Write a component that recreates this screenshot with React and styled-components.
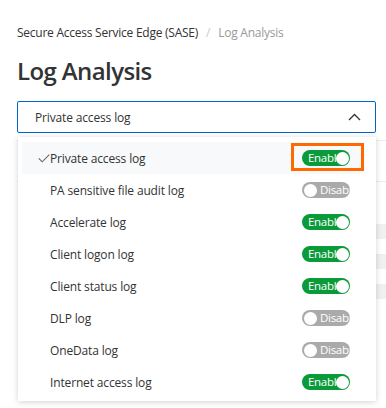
import React from 'react';
import styled, { createGlobalStyle } from 'styled-components';

const GlobalStyle = createGlobalStyle`
  html, body {
    margin: 0;
    padding: 0;
    background: #fff;
    font-family: "Open Sans", "Noto Sans", sans-serif;
  }
`;

const Page = styled.div`
  width: 386px;
  height: 408px;
  overflow: hidden;
  box-sizing: border-box;
  padding: 22px 0 0 17px;
`;

const Breadcrumb = styled.div`
  display: flex;
  align-items: center;
  gap: 8px;
  height: 20px;
  font-size: 12px;
  letter-spacing: -0.25px;
  color: #333;
`;

const Crumb = styled.span`
  color: ${p => (p.current ? '#999' : '#333')};
`;

const Sep = styled.span`
  color: #ccc;
`;

const Title = styled.h1`
  margin: 13px 0 14px;
  height: 32px;
  line-height: 32px;
  font-size: 24px;
  font-weight: 600;
  letter-spacing: -0.6px;
  color: #333;
`;

const SelectWrap = styled.div`
  position: relative;
  width: 369px;
`;

const SelectBox = styled.div`
  display: flex;
  align-items: center;
  justify-content: space-between;
  width: 359px;
  height: 32px;
  box-sizing: border-box;
  border: 1px solid #0064c8;
  border-radius: 2px;
  padding: 0 14px 0 17px;
  font-size: 12px;
  letter-spacing: -0.15px;
  color: #333;
`;

const Backdrop = styled.div`
  margin-top: 7px;
  display: flex;
  flex-direction: column;
`;

const BackLine = styled.div`
  height: ${p => p.h}px;
  border-bottom: 1px solid #ececec;
`;

const BackBand = styled.div`
  height: 15px;
  margin-top: ${p => p.gap}px;
  margin-left: 180px;
  background: #f0f0f0;
`;

const Menu = styled.div`
  position: absolute;
  top: 36px;
  left: 1px;
  width: 358px;
  box-sizing: border-box;
  padding: 5px 11px 3px 4px;
  background: #fff;
  box-shadow: 0 1px 6px rgba(0, 0, 0, 0.18);
`;

const Item = styled.div`
  position: relative;
  display: flex;
  align-items: center;
  justify-content: space-between;
  height: 32px;
  padding: 0 15px 0 28px;
  background: ${p => (p.selected ? '#f7f9fa' : 'transparent')};
  font-size: 12px;
  letter-spacing: -0.15px;
  color: #333;
`;

const Check = styled.svg`
  position: absolute;
  left: 16px;
  top: 12px;
`;

const Toggle = styled.div`
  position: relative;
  width: 48px;
  height: 16px;
  border-radius: 8px;
  background: ${p => (p.on ? '#0a9a3a' : '#aaaaaa')};
  overflow: hidden;
  color: #fff;
  font-size: 11.5px;
  letter-spacing: -0.3px;
  line-height: 16px;
  white-space: nowrap;
  padding-left: ${p => (p.on ? '6px' : '18px')};
  box-sizing: border-box;
`;

const Knob = styled.span`
  position: absolute;
  top: 1.5px;
  ${p => (p.on ? 'right: 1.5px;' : 'left: 1.5px;')}
  width: 13px;
  height: 13px;
  border-radius: 50%;
  background: #fff;
`;

const Highlight = styled.div`
  position: absolute;
  right: 1px;
  top: 1px;
  width: 73px;
  height: 28px;
  box-sizing: border-box;
  border: 3px solid #ff6a00;
`;

const logs = [
  ['Private access log', true],
  ['PA sensitive file audit log', false],
  ['Accelerate log', true],
  ['Client logon log', true],
  ['Client status log', true],
  ['DLP log', false],
  ['OneData log', false],
  ['Internet access log', true],
];

function Switch({ on }) {
  return (
    <Toggle on={on}>
      {on ? 'Enable' : 'Disable'}
      <Knob on={on} />
    </Toggle>
  );
}

export default function App() {
  return (
    <Page>
      <GlobalStyle />
      <Breadcrumb>
        <Crumb>Secure Access Service Edge (SASE)</Crumb>
        <Sep>/</Sep>
        <Crumb current>Log Analysis</Crumb>
      </Breadcrumb>
      <Title>Log Analysis</Title>
      <SelectWrap>
        <SelectBox>
          <span>Private access log</span>
          <svg width="13" height="8" viewBox="0 0 13 8">
            <path d="M1 7 L6.5 1.5 L12 7" fill="none" stroke="#333" strokeWidth="1.3" />
          </svg>
        </SelectBox>
        <Backdrop>
          <BackLine h={0} />
          <BackLine h={40} />
          <BackBand gap={42} />
          <BackBand gap={15} />
          <BackBand gap={15} />
        </Backdrop>
        <Menu>
          {logs.map(([name, on], i) => (
            <Item key={name} selected={i === 0}>
              {i === 0 && (
                <Check width="12" height="9" viewBox="0 0 12 9">
                  <path d="M0.7 4.3 L4.2 7.8 L11.3 0.7" fill="none" stroke="#666" strokeWidth="1.1" />
                </Check>
              )}
              <span>{name}</span>
              <Switch on={on} />
              {i === 0 && <Highlight />}
            </Item>
          ))}
        </Menu>
      </SelectWrap>
    </Page>
  );
}
